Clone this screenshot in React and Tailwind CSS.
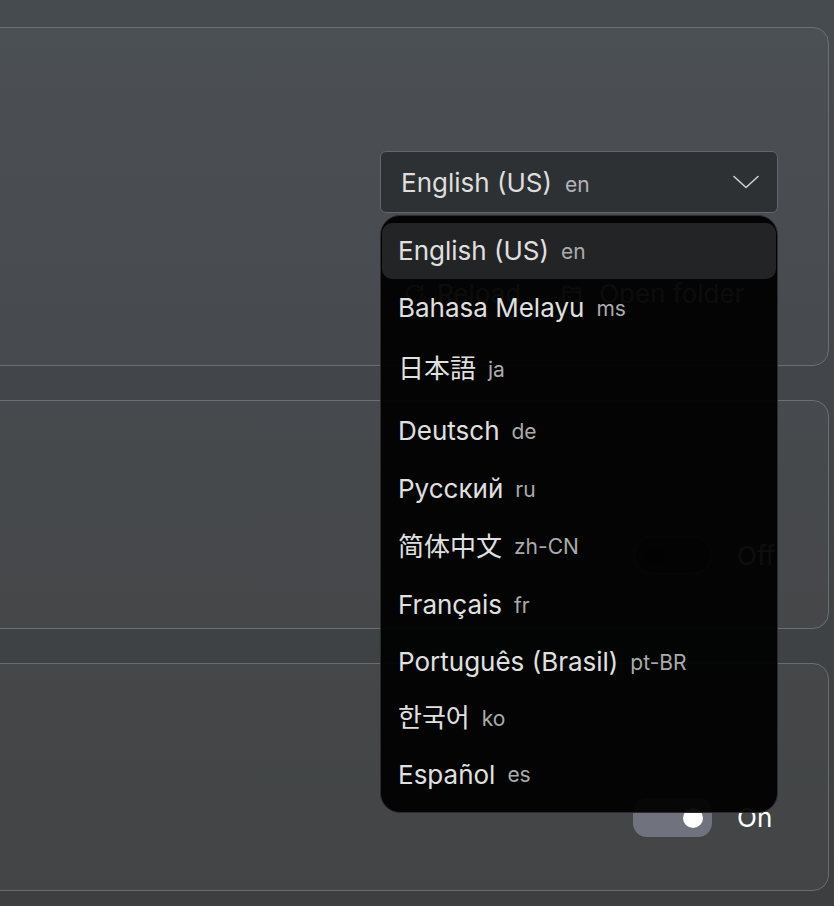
import React, { useState } from 'react';

const languages = [
  { name: 'English (US)', code: 'en', h: 'h-[56px]' },
  { name: 'Bahasa Melayu', code: 'ms', h: 'h-[58px]' },
  { name: '日本語', code: 'ja', h: 'h-[64px]' },
  { name: 'Deutsch', code: 'de', h: 'h-[60px]' },
  { name: 'Русский', code: 'ru', h: 'h-[56px]' },
  { name: '简体中文', code: 'zh-CN', h: 'h-[59px]' },
  { name: 'Français', code: 'fr', h: 'h-[58px]' },
  { name: 'Português (Brasil)', code: 'pt-BR', h: 'h-[56px]' },
  { name: '한국어', code: 'ko', h: 'h-[56px]' },
  { name: 'Español', code: 'es', h: 'h-[57px]' },
];

const fontStack = {
  fontFamily: 'Inter, "Noto Sans CJK JP", "Noto Sans CJK KR", "Noto Sans CJK SC", sans-serif',
};

const Toggle = ({ on }) =>
  on ? (
    <div className="flex h-[39px] w-[79px] items-center justify-end rounded-[14px] bg-[#70737d] pr-[9px]">
      <div className="h-[20px] w-[20px] rounded-full bg-white" />
    </div>
  ) : (
    <div className="flex h-[39px] w-[79px] items-center rounded-full border-2 border-[#5a5e62] bg-[#3a3d40] pl-[9px]">
      <div className="h-[20px] w-[20px] rounded-full bg-[#2a2c2e]" />
    </div>
  );

const App = () => {
  const [selected] = useState('en');
  const current = languages.find((l) => l.code === selected);

  return (
    <div
      className="flex h-[906px] w-[834px] flex-col gap-[34px] overflow-hidden bg-gradient-to-b from-[#464b50] to-[#3c3e3f] pr-[5px] pt-[27px] text-[#e2e2e2]"
      style={fontStack}
    >
      {/* Language card */}
      <div className="relative -ml-5 h-[339px] rounded-2xl border border-[#6a6f73] bg-white/[0.03]">
        <div className="flex h-full flex-col items-end pr-[50px] pt-[123px]">
          <div className="relative w-[398px]">
            <button className="flex h-[62px] w-full items-center justify-between rounded-md border border-[#62676b] bg-[#2e3134] pl-[20px] pr-[18px]">
              <span className="flex items-baseline gap-[13px]">
                <span className="text-[26px] text-[#dedede]">{current.name}</span>
                <span className="text-[21px] text-[#b4b4b4]">{current.code}</span>
              </span>
              <svg width="26" height="14" viewBox="0 0 26 14" fill="none">
                <path d="M1 1.5 L13 12.5 L25 1.5" stroke="#cfcfcf" strokeWidth="1.6" strokeLinecap="round" strokeLinejoin="round" />
              </svg>
            </button>

            {/* Buttons under the menu */}
            <div className="mt-[61px] flex items-center pl-[24px] text-[26px] text-[#c4c4c4]">
              <span className="flex items-center gap-[12px]">
                <svg width="21" height="21" viewBox="0 0 24 24" fill="none" stroke="currentColor" strokeWidth="2" strokeLinecap="round" strokeLinejoin="round">
                  <path d="M21 12a9 9 0 1 1-3-6.7L21 8" />
                  <path d="M21 3v5h-5" />
                </svg>
                Reload
              </span>
              <span className="ml-[40px] flex items-center gap-[16px]">
                <svg width="22" height="22" viewBox="0 0 24 24" fill="none" stroke="currentColor" strokeWidth="2" strokeLinecap="round" strokeLinejoin="round">
                  <path d="M3 6a2 2 0 0 1 2-2h4l2 2h8a2 2 0 0 1 2 2v10a2 2 0 0 1-2 2H5a2 2 0 0 1-2-2z" />
                  <path d="M3 10h18" />
                </svg>
                Open folder
              </span>
            </div>

            {/* Open dropdown */}
            <div className="absolute left-0 top-[64px] z-10 w-[398px] rounded-[20px] border border-[#2c2c2c] bg-black/[0.94] px-[1px] pb-[9px] pt-[7px]">
              {languages.map((lang) => (
                <div
                  key={lang.code}
                  className={`flex ${lang.h} items-center gap-[12px] rounded-[10px] pl-[16px] ${
                    lang.code === selected ? 'bg-[#232425]' : ''
                  }`}
                >
                  <span className="text-[26px] leading-none text-[#e0e0e0]">{lang.name}</span>
                  <span className="text-[21px] leading-none text-[#ababab]">{lang.code}</span>
                </div>
              ))}
            </div>
          </div>
        </div>
      </div>

      {/* Second card */}
      <div className="-ml-5 flex h-[229px] items-end rounded-2xl border border-[#6a6f73] bg-white/[0.03] pb-[53px]">
        <div className="ml-auto flex w-[195px] items-center gap-[25px] pr-[35px]">
          <Toggle on={false} />
          <span className="text-[26px] text-[#e2e2e2]">Off</span>
        </div>
      </div>

      {/* Third card */}
      <div className="-ml-5 flex h-[228px] items-end rounded-2xl border border-[#6a6d6e] bg-white/[0.03] pb-[53px]">
        <div className="ml-auto flex w-[195px] items-center gap-[25px] pr-[35px]">
          <Toggle on />
          <span className="text-[26px] text-white">On</span>
        </div>
      </div>
    </div>
  );
};

export default App;
